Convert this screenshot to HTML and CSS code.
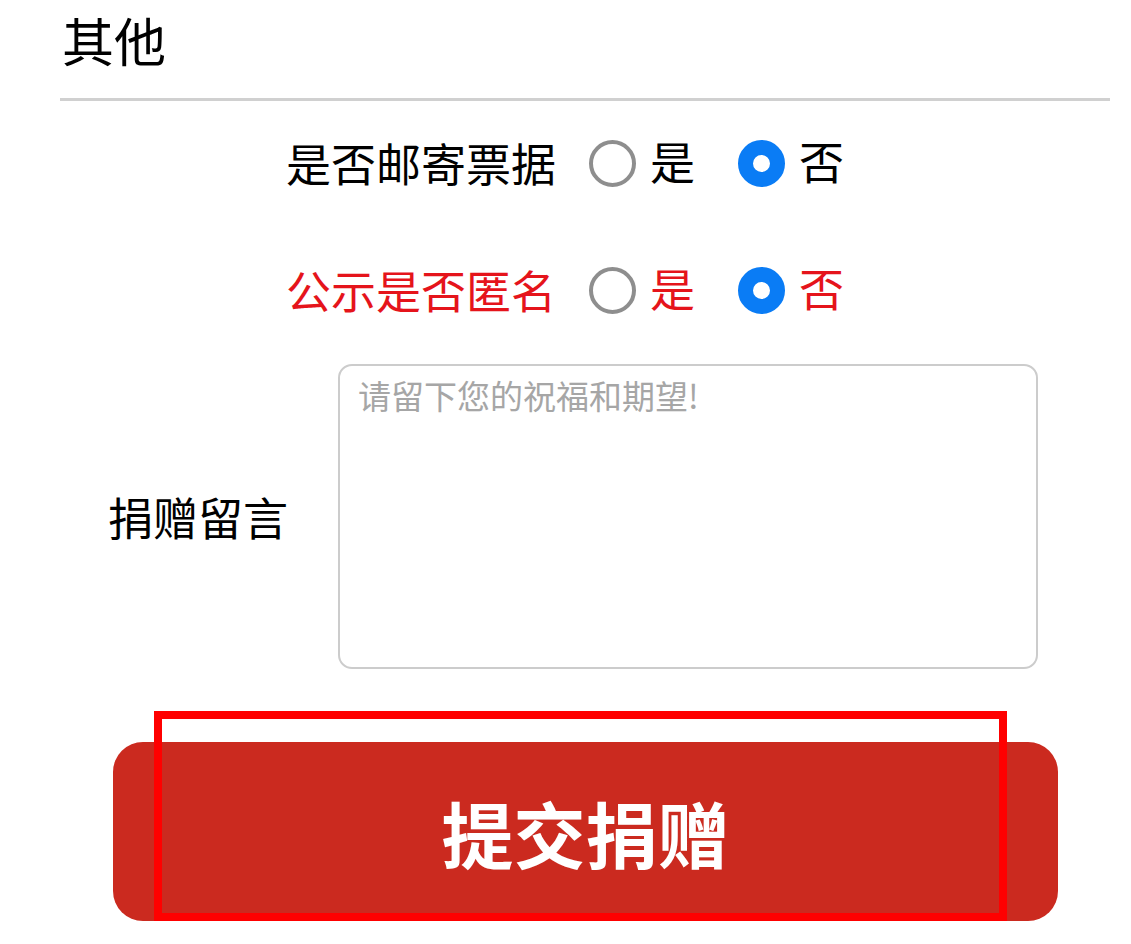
FILE: index.html
```html
<!DOCTYPE html>
<html lang="zh-CN">
<head>
    <meta charset="UTF-8">
    <meta name="viewport" content="width=device-width, initial-scale=1.0">
    <title>其他</title>
    <link rel="stylesheet" href="styles.css">
</head>
<body>
    <div class="page">
        <h2 class="section-title">其他</h2>
        <div class="divider"></div>

        <div class="option-row">
            <span class="option-label">是否邮寄票据</span>
            <label class="radio">
                <input type="radio" name="mail" value="yes">
                <span class="dot"></span>
                <span class="radio-text">是</span>
            </label>
            <label class="radio">
                <input type="radio" name="mail" value="no" checked>
                <span class="dot"></span>
                <span class="radio-text">否</span>
            </label>
        </div>

        <div class="option-row red">
            <span class="option-label">公示是否匿名</span>
            <label class="radio">
                <input type="radio" name="anon" value="yes">
                <span class="dot"></span>
                <span class="radio-text">是</span>
            </label>
            <label class="radio">
                <input type="radio" name="anon" value="no" checked>
                <span class="dot"></span>
                <span class="radio-text">否</span>
            </label>
        </div>

        <div class="message-row">
            <label for="message" class="message-label">捐赠留言</label>
            <textarea id="message" class="message" placeholder="请留下您的祝福和期望!"></textarea>
        </div>

        <div class="submit-wrap">
            <button type="submit" class="submit">提交捐赠</button>
            <div class="highlight"></div>
        </div>
    </div>
</body>
</html>
```

FILE: styles.css
```css
body{
    margin:0;
    background-color:#ffffff;
    font-family:"Noto Sans CJK SC", "Noto Sans", sans-serif;
    color:#000000;
}

.page{
    width:1131px;
    height:944px;
    overflow:hidden;
}

.section-title{
    margin:4px 0 0 0;
    padding-left:62px;
    font-size:52px;
    font-weight:normal;
    line-height:72px;
}

.divider{
    margin:22px 21px 0 60px;
    height:3px;
    background-color:#d0d0d0;
}

.option-row{
    display:flex;
    align-items:center;
    height:60px;
    margin-top:32px;
    padding-left:286px;
    font-size:45px;
    line-height:60px;
}
.option-row + .option-row{
    margin-top:67px;
}
.red{
    color:#e5141b;
}

.option-label{
    width:270px;
    margin-right:33px;
    white-space:nowrap;
}

.radio{
    display:flex;
    align-items:center;
    margin-right:43px;
}
.radio input{
    display:none;
}
.dot{
    box-sizing:border-box;
    width:47px;
    height:47px;
    border:4px solid #8e8e8e;
    border-radius:50%;
    margin-right:14px;
}
.radio input:checked + .dot{
    border:15px solid #0a7cf5;
}
.radio-text{
    margin-top:-4px;
}

.message-row{
    display:flex;
    align-items:center;
    margin-top:44px;
    padding-left:108px;
}
.message-label{
    width:180px;
    margin-right:50px;
    font-size:45px;
    white-space:nowrap;
}
.message{
    box-sizing:border-box;
    width:700px;
    height:305px;
    border:2px solid #cccccc;
    border-radius:14px;
    padding:5px 18px;
    font-family:"Noto Sans CJK SC", "Noto Sans", sans-serif;
    font-size:33px;
    resize:none;
    outline:none;
}
.message::placeholder{
    color:#a6a6a6;
}

.submit-wrap{
    position:relative;
    margin:73px 0 0 113px;
    width:945px;
}
.submit{
    display:block;
    width:945px;
    height:179px;
    border:none;
    border-radius:30px;
    background-color:#cb2a1f;
    color:#ffffff;
    font-family:"Noto Sans CJK SC", "Noto Sans", sans-serif;
    font-size:72px;
    font-weight:bold;
}

.highlight{
    position:absolute;
    box-sizing:border-box;
    left:41px;
    top:-31px;
    width:853px;
    height:210px;
    border:8px solid #ff0000;
}
```
